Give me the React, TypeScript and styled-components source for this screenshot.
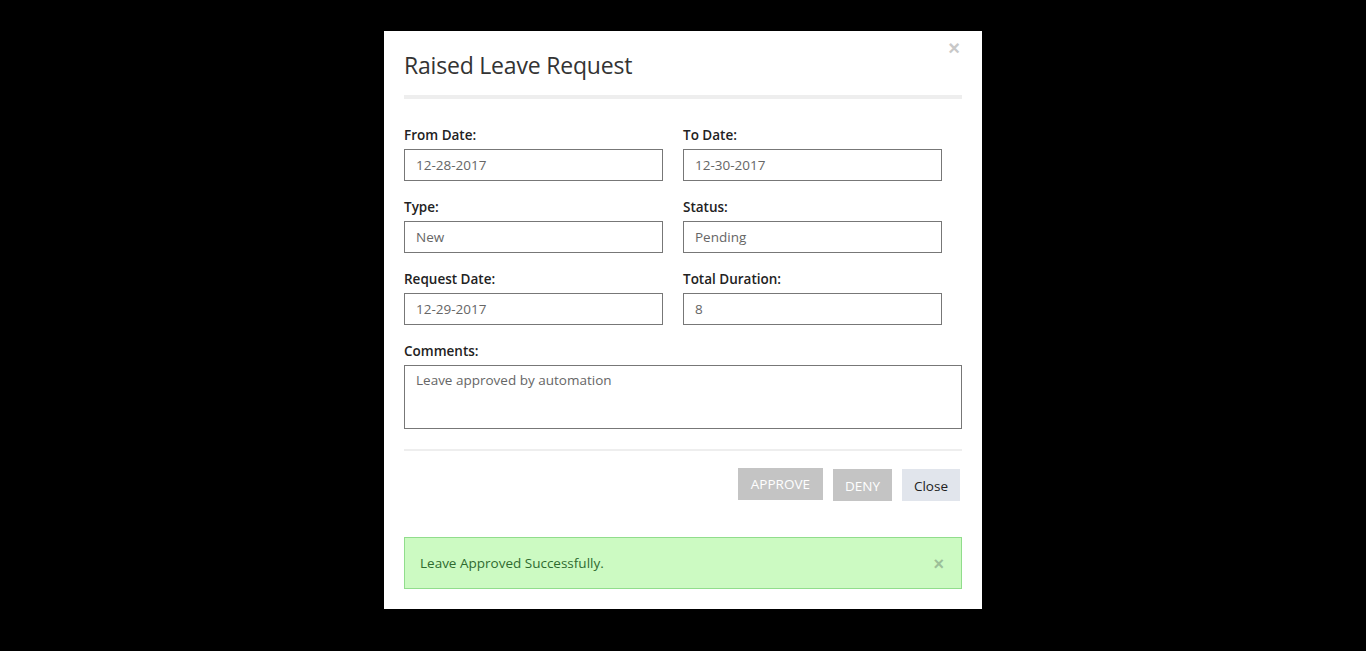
import React from "react";
import styled, { createGlobalStyle } from "styled-components";

const Global = createGlobalStyle`
  html, body { margin: 0; padding: 0; background: #000; }
  body { font-family: "Segoe UI", "Open Sans", "Liberation Sans", sans-serif; }
  * { box-sizing: border-box; }
`;

const Backdrop = styled.div`
  min-height: 651px;
  background: #000;
  display: flex;
  justify-content: center;
  align-items: flex-start;
  padding-top: 31px;
`;

const Modal = styled.div`
  position: relative;
  width: 598px;
  background: #fff;
  padding: 0 20px 20px 20px;
`;

const CloseX = styled.span`
  position: absolute;
  top: 7px;
  right: 22px;
  color: #c8c8c8;
  font-size: 20px;
  font-weight: bold;
  line-height: 20px;
  font-family: "Liberation Sans", Arial, sans-serif;
`;

const Header = styled.div`
  padding-top: 21px;
  padding-bottom: 16px;
  border-bottom: 4px solid #eeeeee;
`;

const Title = styled.h4`
  margin: 0;
  font-size: 23px;
  font-weight: normal;
  color: #333;
  line-height: 27px;
  letter-spacing: -0.2px;
`;

const Body = styled.div`
  padding-top: 26px;
`;

const Grid = styled.div`
  display: grid;
  grid-template-columns: 1fr 1fr;
`;

const Field = styled.div<{ $full?: boolean }>`
  padding-right: ${(p) => (p.$full ? "0" : "20px")};
  margin-bottom: 16px;
  grid-column: ${(p) => (p.$full ? "1 / span 2" : "auto")};
`;

const Label = styled.label`
  display: block;
  font-size: 13.5px;
  font-weight: 600;
  color: #222;
  line-height: 20px;
  margin-bottom: 4px;
`;

const Input = styled.div<{ $tall?: boolean }>`
  height: ${(p) => (p.$tall ? "64px" : "32px")};
  border: 1px solid #777;
  padding: ${(p) => (p.$tall ? "4px 11px" : "0 11px 1px 11px")};
  display: flex;
  align-items: ${(p) => (p.$tall ? "flex-start" : "center")};
  font-size: 13.5px;
  color: #666;
  line-height: 20px;
`;

const Divider = styled.div`
  height: 2px;
  background: #eeeeee;
  margin-top: 4px;
`;

const Footer = styled.div`
  display: flex;
  justify-content: flex-end;
  align-items: flex-start;
  gap: 10px;
  padding: 17px 2px 0 0;
`;

const Button = styled.button<{ $variant: "muted" | "light"; $lift?: boolean }>`
  height: 32px;
  border: none;
  padding: 0 12px;
  font-family: inherit;
  font-size: 13.5px;
  background: ${(p) => (p.$variant === "light" ? "#e1e5ec" : "#c4c4c4")};
  color: ${(p) => (p.$variant === "light" ? "#222" : "#fff")};
  text-transform: ${(p) => (p.$variant === "light" ? "none" : "uppercase")};
  margin-top: ${(p) => (p.$lift ? "0" : "1px")};
  padding-top: ${(p) => (p.$lift ? "0" : "2px")};
  ${(p) => (p.$lift ? "padding-left: 13px; padding-right: 13px;" : "")}
`;

const Alert = styled.div`
  position: relative;
  margin-top: 36px;
  height: 52px;
  background: #ccfac2;
  border: 1px solid #91dd8c;
  color: #2f6b2f;
  font-size: 13.5px;
  padding: 0 15px;
  display: flex;
  align-items: center;
`;

const AlertX = styled.span`
  position: absolute;
  right: 17px;
  top: 17px;
  color: #9cbf99;
  font-size: 18px;
  font-weight: bold;
  line-height: 18px;
  font-family: "Liberation Sans", Arial, sans-serif;
`;

const fields = [
  { label: "From Date:", value: "12-28-2017" },
  { label: "To Date:", value: "12-30-2017" },
  { label: "Type:", value: "New" },
  { label: "Status:", value: "Pending" },
  { label: "Request Date:", value: "12-29-2017" },
  { label: "Total Duration:", value: "8" },
];

export default function App() {
  return (
    <>
      <Global />
      <Backdrop>
        <Modal>
          <CloseX>×</CloseX>
          <Header>
            <Title>Raised Leave Request</Title>
          </Header>
          <Body>
            <Grid>
              {fields.map((f) => (
                <Field key={f.label}>
                  <Label>{f.label}</Label>
                  <Input>{f.value}</Input>
                </Field>
              ))}
              <Field $full>
                <Label>Comments:</Label>
                <Input $tall>Leave approved by automation</Input>
              </Field>
            </Grid>
            <Divider />
            <Footer>
              <Button $variant="muted" $lift>APPROVE</Button>
              <Button $variant="muted">Deny</Button>
              <Button $variant="light">Close</Button>
            </Footer>
            <Alert>
              Leave Approved Successfully.
              <AlertX>×</AlertX>
            </Alert>
          </Body>
        </Modal>
      </Backdrop>
    </>
  );
}
